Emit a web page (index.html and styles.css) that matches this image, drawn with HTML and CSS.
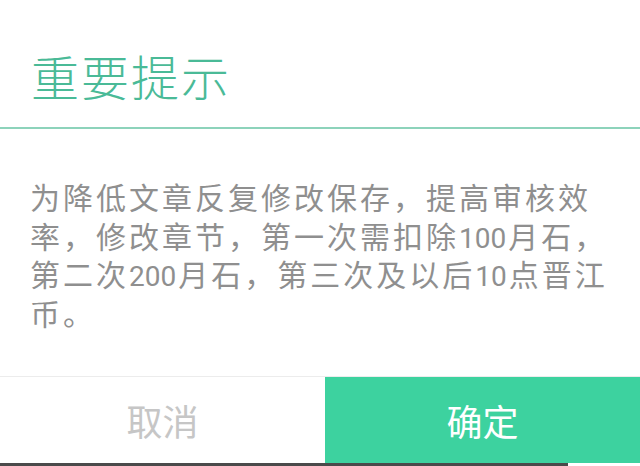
FILE: index.html
```html
<!DOCTYPE html>
<html>

<head>
  <meta charset="utf-8" name="viewport" content="width=device-width, initial-scale=1">
  <title>重要提示</title>
  <link rel="stylesheet" href="styles.css">
</head>

<body>
  <div class="dialog">
    <div class="dialogTitle">重要提示</div>
    <div class="dialogLine"></div>
    <div class="dialogText">为降低文章反复修改保存，提高审核效率，修改章节，第一次需扣除<span class="num">100</span>月石，第二次<span class="num">200</span>月石，第三次及以后<span class="num">10</span>点晋江币。</div>
    <div class="dialogButtons">
      <button type="button" class="btnCancel">取消</button>
      <button type="button" class="btnOk">确定</button>
    </div>
  </div>
  <div class="underStrip"></div>
</body>

</html>
```

FILE: styles.css
```css
body {
  margin: 0;
  background-color: white;
  font-family: "Noto Sans CJK SC", "Noto Sans", sans-serif;
}

.dialog {
  width: 640px;
  height: 463px;
  display: flex;
  flex-direction: column;
  background-color: white;
}

.dialogTitle {
  height: 127px;
  padding-left: 31px;
  box-sizing: border-box;
  padding-top: 47px;
  font-size: 48px;
  font-weight: 300;
  line-height: 56px;
  color: #4aba97;
  letter-spacing: 2px;
}

.dialogLine {
  height: 2px;
  background-color: #8dd3bb;
}

.dialogText {
  flex: 1;
  padding: 48px 25px 0 30px;
  font-size: 30px;
  line-height: 38.5px;
  letter-spacing: 3px;
  color: #8f8f8f;
}

.num {
  font-family: Roboto, sans-serif;
  font-size: 28px;
  line-height: 20px;
  letter-spacing: 0;
  margin-right: 2px;
}

.dialogButtons {
  display: flex;
  height: 86px;
  border-top: 1px solid #ececec;
}

.btnCancel {
  width: 325px;
  border: none;
  background-color: white;
  color: #c6c6c6;
  font-family: inherit;
  font-size: 36px;
  padding: 0;
}

.btnOk {
  flex: 1;
  border: none;
  background-color: #3dd29f;
  color: white;
  font-family: inherit;
  font-size: 36px;
  padding: 0;
}

.underStrip {
  height: 3px;
  width: 568px;
  background-color: #4a4a4a;
}
```
